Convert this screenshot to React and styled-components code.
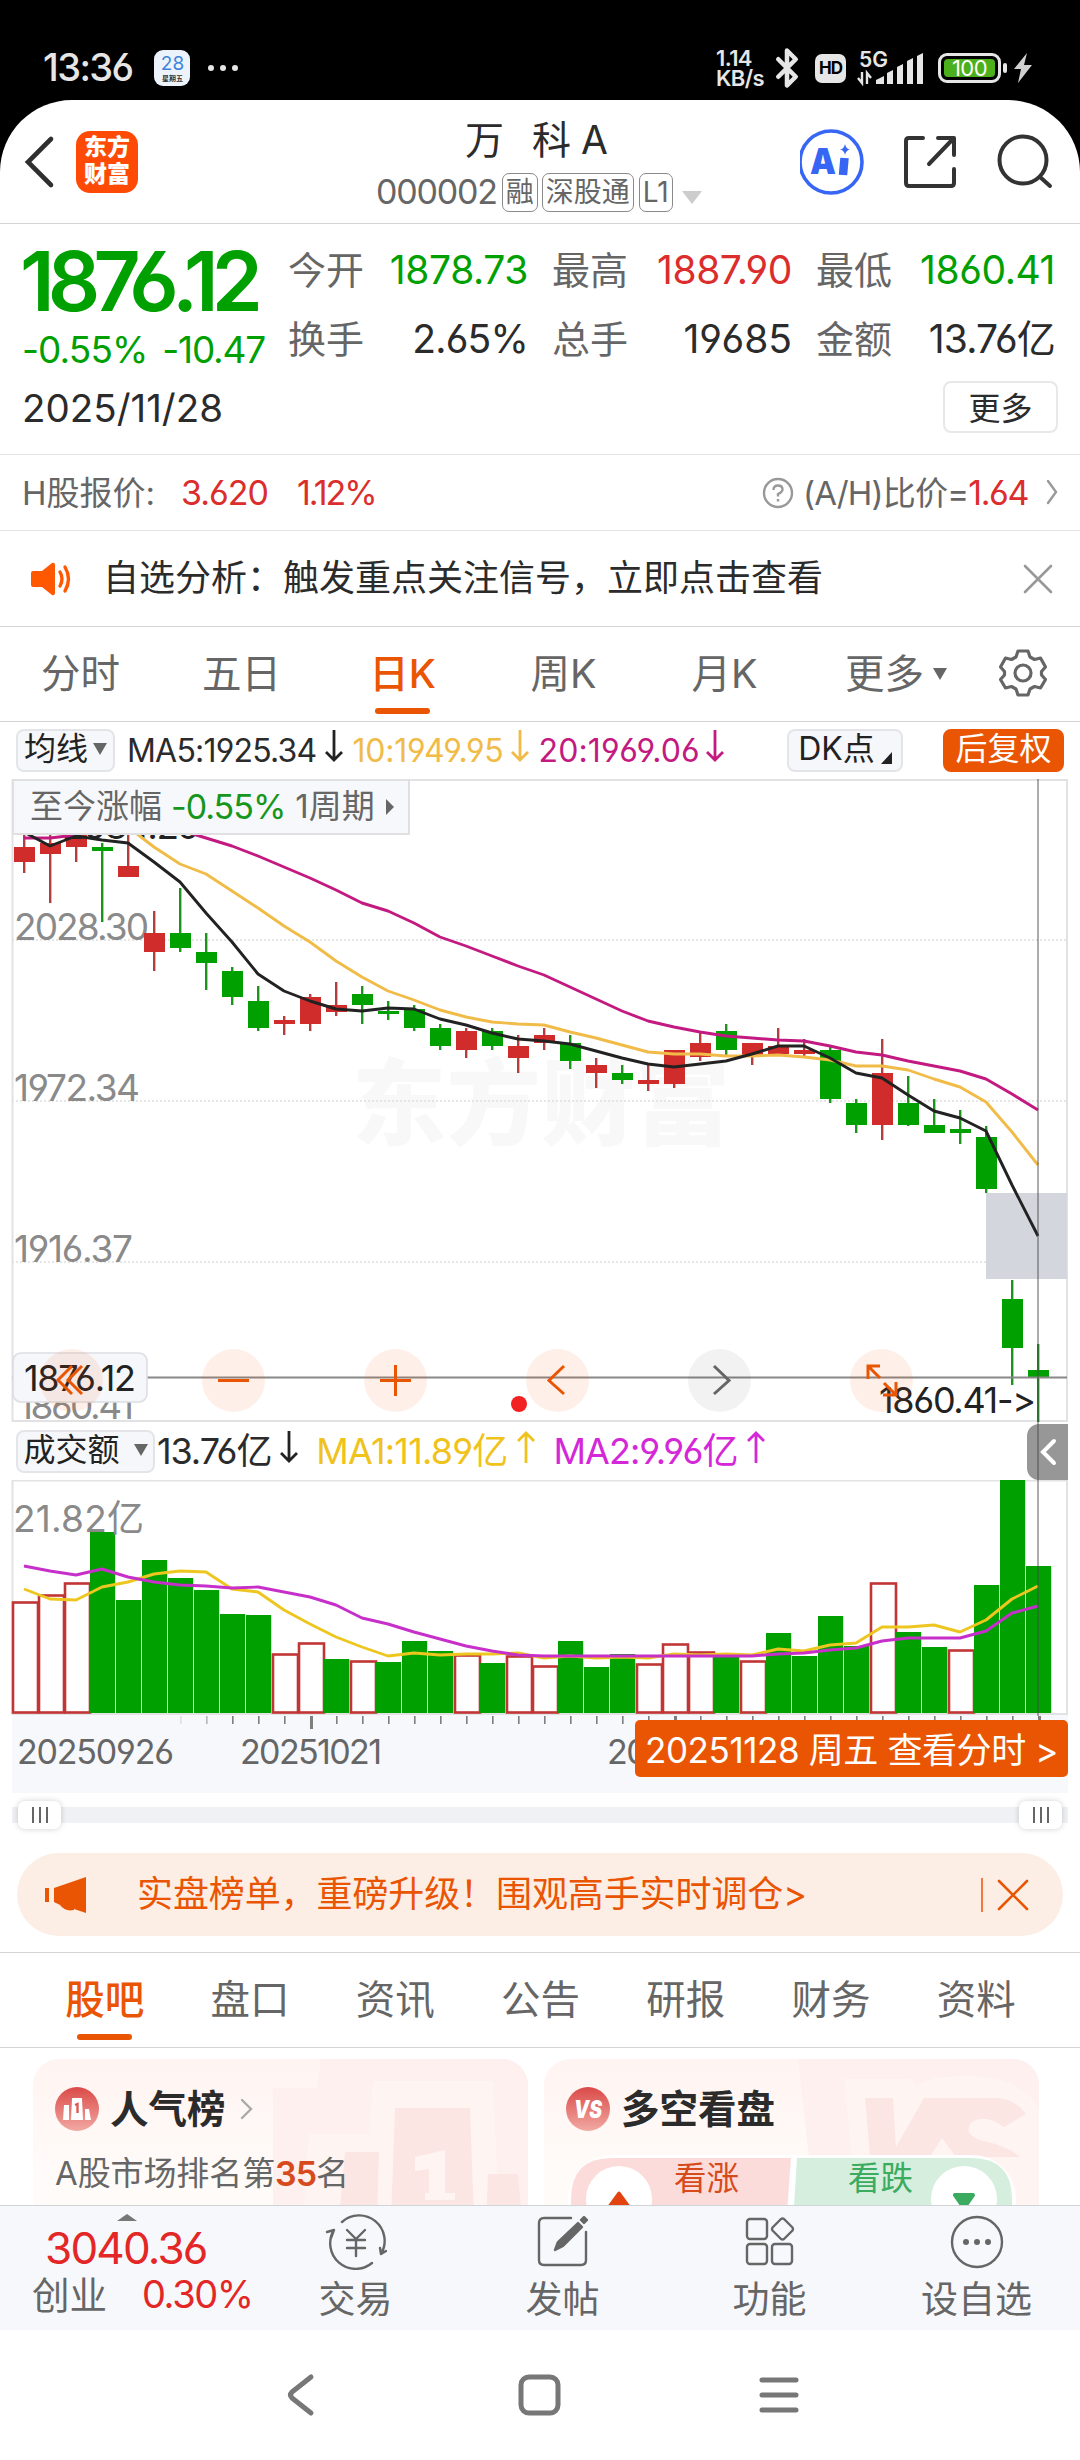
import React from "react";
import styled, { createGlobalStyle } from "styled-components";
import { Bluetooth } from "lucide-react";

const GlobalStyle = createGlobalStyle`
  * {
    box-sizing: border-box;
  }

  body {
    margin: 0;
    background: #fff;
    font-family: Inter, "Noto Sans CJK SC", sans-serif;
    font-feature-settings: "cv03", "cv04";
    color: #2b2b2b;
  }
`;

const ORANGE = "#ea5504";
const GREEN = "#00a000";
const RED = "#d12c2c";
const GREY = "#666";

const Screen = styled.div`
  width: 1080px;
  height: 2460px;
  overflow: hidden;
  display: flex;
  flex-direction: column;
  background: #000;
`;

/* s is letter spacing, ml the gap to the item before */
const Text = styled.span`
  font-size: ${({ size }) => size || 33}px;
  line-height: 1.2;
  color: ${({ c }) => c || "#2b2b2b"};
  font-weight: ${({ w }) => w || 400};
  letter-spacing: ${({ s }) => s || 0}px;
  margin-left: ${({ ml }) => ml || 0}px;
  padding-top: ${({ pt }) => pt || 0}px;
  white-space: pre;
`;

/* ---------- status bar ---------- */

const StatusBar = styled.div`
  height: 100px;
  flex: none;
  padding: 36px 48px 0 43px;
  display: flex;
  align-items: center;
  color: #e6e6e6;
`;

const Calendar = styled.div`
  width: 36px;
  height: 36px;
  margin-left: 22px;
  border-radius: 9px;
  background: #edf3fa;
  display: flex;
  flex-direction: column;
  align-items: center;
  color: #3c84dc;
  font-size: 19px;
  line-height: 22px;
  padding-top: 3px;

  small {
    font-size: 7px;
    line-height: 8px;
    font-weight: 700;
    color: #333;
  }
`;

const Dots = styled.svg`
  width: 32px;
  height: 8px;
  margin-left: 17px;
  fill: #e6e6e6;
`;

const Speed = styled.div`
  margin-left: auto;
  width: 50px;
  font-size: 22px;
  line-height: 20px;
  font-weight: 600;
  letter-spacing: -0.6px;
`;

const HdBadge = styled.div`
  width: 31px;
  height: 29px;
  margin-left: 7px;
  border-radius: 7px;
  background: #e6e6e6;
  color: #000;
  font-size: 17px;
  font-weight: 700;
  letter-spacing: -1px;
  display: flex;
  align-items: center;
  justify-content: center;
`;

const Network = styled.svg`
  width: 70px;
  height: 36px;
  margin-left: 10px;
`;

const Battery = styled.div`
  width: 63px;
  height: 30px;
  margin-left: 12px;
  border: 3px solid #e6e6e6;
  border-radius: 9px;
  padding: 3px;
  display: flex;

  span {
    flex: 1;
    border-radius: 4px;
    background: #4cb01c;
    color: #fff;
    font-size: 22px;
    line-height: 18px;
    text-align: center;
    letter-spacing: -0.5px;
  }
`;

const Charge = styled.svg`
  width: 31px;
  height: 32px;
`;

/* ---------- header ---------- */

const Page = styled.div`
  flex: 1;
  background: #fff;
  border-radius: 72px 72px 0 0;
  display: flex;
  flex-direction: column;
`;

const Header = styled.header`
  height: 124px;
  flex: none;
  border-bottom: 1px solid #d4d4d4;
  display: grid;
  grid-template-columns: 376px 1fr 280px;
`;

const HeaderLeft = styled.div`
  padding: 31px 0 0 22px;
  display: flex;
  align-items: flex-start;
`;

const Logo = styled.div`
  width: 62px;
  height: 62px;
  margin-left: 20px;
  border-radius: 14px;
  background: #ff4a05;
  color: #fff;
  font-size: 23px;
  font-weight: 900;
  line-height: 27px;
  text-align: center;
  padding-top: 3px;
`;

const HeaderCenter = styled.div`
  display: flex;
  flex-direction: column;
`;

const StockName = styled.div`
  margin: 15px 0 0 89px;
  font-size: 39px;
  line-height: 50px;
  white-space: pre;
  word-spacing: 17px;

  span {
    margin-left: 10px;
  }
`;

const CodeLine = styled.div`
  margin-top: 8px;
  height: 39px;
  display: flex;
  align-items: center;
`;

const Tag = styled.span`
  height: 39px;
  margin-left: ${({ ml }) => ml}px;
  width: ${({ width }) => width}px;
  border: 1.5px solid #8a8a8a;
  border-radius: 7px;
  display: flex;
  align-items: center;
  justify-content: center;
  font-size: 28px;
  line-height: 34px;
  padding-bottom: 2px;
  color: #666;
  flex: none;
`;

const HeaderRight = styled.svg`
  width: 280px;
  height: 122px;
`;

/* ---------- quote ---------- */

const Quote = styled.section`
  height: 231px;
  flex: none;
  padding: 0 25px 0 22px;
  border-bottom: 1px solid #e4e4e4;
  display: grid;
  grid-template-columns: 266px 1fr;
  grid-template-rows: 151px 1fr;
`;

const PriceBlock = styled.div`
  display: flex;
  flex-direction: column;
`;

const Price = styled.div`
  margin: 12px 0 0 -2px;
  font-size: 82px;
  line-height: 92px;
  font-weight: 600;
  color: ${GREEN};
  letter-spacing: -6.8px;
`;

const Change = styled.div`
  display: flex;
  justify-content: space-between;
  width: 243px;
`;

const Stats = styled.div`
  padding-top: 12px;
  display: grid;
  grid-template-columns: 240px 240px 239px;
  grid-template-rows: 69px 69px;
  column-gap: 24px;
`;

const Stat = styled.div`
  display: flex;
  align-items: center;
  justify-content: space-between;
`;

const MoreButton = styled.button`
  justify-self: end;
  width: 115px;
  height: 52px;
  margin: 6px -3px 0 0;
  padding: 0 0 2px;
  border: 2px solid #e8e8e8;
  border-radius: 8px;
  background: #fff;
  font: inherit;
  font-size: 32px;
  color: #2b2b2b;
`;

const HkRow = styled.div`
  height: 76px;
  flex: none;
  padding: 2px 22px 0;
  border-bottom: 1px solid #e4e4e4;
  display: flex;
  align-items: center;
`;

const Push = styled.div`
  margin-left: auto;
  display: flex;
  align-items: center;
`;

const Notice = styled.div`
  height: 96px;
  flex: none;
  padding: 0 27px 0 30px;
  border-bottom: 1px solid #d4d4d4;
  display: flex;
  align-items: center;
`;

/* ---------- tabs ---------- */

const PeriodTabs = styled.nav`
  height: 95px;
  flex: none;
  border-bottom: 1px solid #d4d4d4;
  display: grid;
  grid-template-columns: repeat(5, 161px) 182px 72px;
`;

const InfoTabs = styled.nav`
  height: 96px;
  flex: none;
  padding: 0 31px 0 32px;
  border-top: 1px solid #d4d4d4;
  border-bottom: 1px solid #d4d4d4;
  display: grid;
  grid-template-columns: repeat(7, 1fr);
`;

const Tab = styled.div`
  display: flex;
  flex-direction: column;
  align-items: center;
  justify-content: space-between;
  padding: 22px 0 7px;
  font-size: 39.5px;
  line-height: 50px;
  color: ${({ $active }) => ($active ? ORANGE : GREY)};
  font-weight: ${({ $active }) => ($active ? 500 : 400)};

  &::after {
    content: "";
    width: 55px;
    height: 6px;
    border-radius: 3px;
    background: ${({ $active }) => ($active ? ORANGE : "transparent")};
  }
`;

const TabLabel = styled.span`
  display: flex;
  align-items: center;
  gap: 9px;
`;

/* ---------- chart ---------- */

const IndicatorRow = styled.div`
  height: 57px;
  flex: none;
  padding: 0 16px;
  display: flex;
  align-items: center;
`;

const Pill = styled.div`
  width: ${({ width }) => width}px;
  height: 43px;
  margin-left: ${({ ml }) => ml || 0}px;
  padding-bottom: 3px;
  border: 2px solid ${({ $solid }) => ($solid ? ORANGE : "#e3e5e9")};
  border-radius: 8px;
  background: ${({ $solid }) => ($solid ? ORANGE : "#f6f7fa")};
  color: ${({ $solid }) => ($solid ? "#fff" : "#222")};
  font-size: 32px;
  line-height: 36px;
  display: flex;
  align-items: center;
  justify-content: center;
  gap: ${({ gap }) => gap || 5}px;
  flex: none;
`;

const ChartArea = styled.div`
  position: relative;
  flex: none;
  height: 1015px;
  display: flex;
  flex-direction: column;
`;

const Drawing = styled.svg`
  display: block;
  flex: none;
  width: 1080px;
  height: ${({ h }) => h}px;
`;

const AxisText = styled.text`
  font-feature-settings: "cv03", "cv04", "calt" 0;
`;

const VolumeRow = styled.div`
  height: 58px;
  flex: none;
  padding-left: 16px;
  display: flex;
  align-items: center;
`;

const RangeInfo = styled.div`
  position: absolute;
  left: 12px;
  top: 0;
  width: 398px;
  height: 56px;
  border: 2px solid #e0e0e2;
  background: #f7f8fb;
  padding-left: 16px;
  display: flex;
  align-items: center;
`;

const PeriodArrow = styled.svg`
  width: 9px;
  height: 18px;
  margin-left: 11px;
`;

const CrossLine = styled.div`
  position: absolute;
  left: 1037px;
  top: 0;
  width: 2px;
  height: 937px;
  background: rgba(70, 70, 70, 0.45);
`;

const ZoomBar = styled.div`
  position: absolute;
  left: 40px;
  top: 570px;
  display: flex;
  gap: 99px;
`;

const RoundButton = styled.div`
  width: 63px;
  height: 63px;
  border-radius: 50%;
  background: ${({ $muted }) => ($muted ? "rgba(0,0,0,0.05)" : "rgba(240,90,10,0.09)")};

  svg {
    display: block;
    fill: none;
    stroke: ${({ $muted }) => ($muted ? GREY : ORANGE)};
    stroke-width: 3;
  }
`;

const SideHandle = styled.div`
  position: absolute;
  left: 1027px;
  top: 645px;
  width: 41px;
  height: 56px;
  border-radius: 12px 0 0 12px;
  background: rgba(120, 120, 120, 0.77);
  display: flex;
  align-items: center;
  justify-content: center;
`;

const DateBadge = styled.div`
  position: absolute;
  left: 635px;
  top: 941px;
  width: 433px;
  height: 57px;
  padding-bottom: 3px;
  border-radius: 5px;
  background: ${ORANGE};
  color: #fff;
  font-size: 35px;
  display: flex;
  align-items: center;
  justify-content: center;
  white-space: pre;
  letter-spacing: -0.4px;
`;

const Slider = styled.div`
  height: 42px;
  flex: none;
  margin: 0 12px;
  padding-top: 7px;
`;

const Track = styled.div`
  height: 28px;
  padding: 0 6px;
  border-radius: 8px;
  background: linear-gradient(#fff 6px, #f0f1f4 6px, #f0f1f4 22px, #fff 22px);
  display: flex;
  justify-content: space-between;
`;

const Grip = styled.div`
  width: 43px;
  height: 28px;
  border-radius: 7px;
  background: #fff;
  box-shadow: 0 0 6px rgba(0, 0, 0, 0.18);
  display: flex;
  align-items: center;
  justify-content: center;
  gap: 5px;

  i {
    width: 2px;
    height: 16px;
    background: #666;
  }
`;

const Banner = styled.div`
  height: 83px;
  flex: none;
  margin: 17px 17px 16px;
  padding: 0 34px 0 28px;
  border-radius: 42px;
  background: #fceee5;
  display: flex;
  align-items: center;
`;

/* ---------- cards ---------- */

const Cards = styled.div`
  height: 157px;
  flex: none;
  overflow: hidden;
  padding: 11px 41px 0 33px;
  display: grid;
  grid-template-columns: 495px 495px;
  gap: 16px;
`;

const Card = styled.div`
  position: relative;
  height: 190px;
  border-radius: 26px;
  overflow: hidden;
  background: linear-gradient(#fff4f2, #fffbf8 60%);
`;

const CardArt = styled.svg`
  position: absolute;
  right: 0;
  top: 0;
  width: 255px;
  height: 160px;
`;

const CardBody = styled.div`
  position: relative;
  padding: 27px 22px 0;
`;

const CardTitle = styled.div`
  height: 46px;
  display: flex;
  align-items: center;
`;

const Duel = styled.svg`
  display: block;
  width: 451px;
  height: 80px;
  margin-top: 21px;
`;

/* ---------- bottom ---------- */

const BottomBar = styled.footer`
  height: 125px;
  flex: none;
  border-top: 1px solid #cfd4d8;
  background: #f7f8fb;
  display: grid;
  grid-template-columns: 252px repeat(4, 207px);
`;

const IndexBox = styled.div`
  padding: 8px 0 0 32px;
  display: flex;
  flex-direction: column;
`;

const IndexLine = styled.div`
  display: flex;
  align-items: center;
  height: ${({ h }) => h}px;
`;

const Action = styled.div`
  padding-top: 8px;
  display: flex;
  flex-direction: column;
  align-items: center;
  font-size: 37px;
  line-height: 48px;
  color: ${GREY};

  svg {
    display: block;
    margin-bottom: 6px;
    fill: none;
    stroke: #666;
    stroke-width: 2.4;
    stroke-linecap: round;
    stroke-linejoin: round;
  }
`;

const SystemNav = styled.div`
  height: 130px;
  flex: none;
  background: #fff;

  svg {
    display: block;
    fill: none;
    stroke: #777;
    stroke-width: 5;
    stroke-linecap: round;
    stroke-linejoin: round;
  }
`;

/* up/down, high, body top, body bottom, low */
const candles = [
  [1, 825, 847, 862, 873], [1, 825, 843, 854, 903], [1, 800, 830, 847, 862],
  [0, 843, 847, 851, 922], [1, 820, 866, 877, 877], [1, 911, 933, 952, 971],
  [0, 888, 933, 948, 952], [0, 933, 952, 963, 990], [0, 967, 971, 997, 1005],
  [0, 986, 1001, 1028, 1031], [1, 1016, 1020, 1024, 1035], [1, 994, 997, 1024, 1031],
  [1, 982, 1005, 1012, 1016], [0, 986, 994, 1005, 1024], [0, 1001, 1011, 1014, 1020],
  [0, 1005, 1009, 1028, 1031], [0, 1024, 1028, 1046, 1050], [1, 1028, 1031, 1050, 1058],
  [0, 1028, 1031, 1046, 1050], [1, 1035, 1046, 1058, 1073], [1, 1028, 1035, 1043, 1050],
  [0, 1035, 1043, 1061, 1069], [1, 1058, 1065, 1073, 1088], [0, 1065, 1073, 1080, 1084],
  [1, 1065, 1080, 1084, 1091], [1, 1050, 1050, 1084, 1088], [1, 1032, 1043, 1057, 1061],
  [0, 1024, 1031, 1050, 1057], [1, 1043, 1043, 1057, 1065], [1, 1028, 1046, 1054, 1054],
  [1, 1039, 1050, 1054, 1056], [0, 1047, 1050, 1099, 1103], [0, 1099, 1103, 1125, 1133],
  [1, 1039, 1073, 1125, 1140], [0, 1076, 1103, 1125, 1126], [0, 1099, 1125, 1133, 1133],
  [0, 1110, 1129, 1133, 1144], [0, 1126, 1137, 1189, 1193], [0, 1280, 1299, 1348, 1385],
  [0, 1344, 1370, 1377, 1423],
];

const ma5 = [832, 846, 836, 840, 843, 862, 882, 913, 942, 974, 991, 1001, 1009, 1011, 1008, 1009, 1019, 1025, 1033, 1039, 1041, 1044, 1051, 1058, 1064, 1067, 1064, 1061, 1054, 1046, 1046, 1058, 1073, 1078, 1095, 1111, 1118, 1131, 1185, 1236];
const ma10 = [800, 800, 805, 812, 827, 847, 864, 874, 891, 908, 926, 942, 961, 977, 991, 1000, 1010, 1017, 1022, 1024, 1025, 1032, 1038, 1045, 1052, 1054, 1054, 1056, 1056, 1055, 1057, 1060, 1066, 1066, 1070, 1079, 1087, 1102, 1132, 1165];
const ma20 = [838, 838, 835, 830, 826, 826, 830, 838, 846, 856, 867, 878, 890, 903, 911, 923, 937, 946, 956, 966, 975, 987, 999, 1011, 1021, 1027, 1032, 1036, 1038, 1040, 1041, 1046, 1052, 1055, 1061, 1066, 1071, 1079, 1094, 1110];

/* up/down, bar top */
const volumes = [
  [1, 1602], [1, 1595], [1, 1583], [0, 1532], [0, 1600], [0, 1560], [0, 1578], [0, 1590],
  [0, 1614], [0, 1615], [1, 1654], [1, 1643], [0, 1659], [1, 1661], [0, 1662], [0, 1641],
  [0, 1651], [1, 1655], [0, 1663], [1, 1656], [1, 1666], [0, 1641], [0, 1667], [0, 1654],
  [1, 1664], [1, 1644], [1, 1652], [0, 1657], [1, 1661], [0, 1633], [0, 1656], [0, 1616],
  [0, 1646], [1, 1583], [0, 1632], [0, 1647], [1, 1650], [0, 1585], [0, 1480], [0, 1566],
];

const vma1 = [1589, 1599, 1600, 1587, 1582, 1574, 1571, 1572, 1589, 1592, 1610, 1624, 1637, 1647, 1656, 1653, 1655, 1654, 1654, 1653, 1658, 1656, 1658, 1657, 1658, 1654, 1655, 1654, 1655, 1649, 1651, 1645, 1643, 1627, 1627, 1625, 1632, 1620, 1599, 1586];
const vma2 = [1566, 1571, 1575, 1569, 1577, 1582, 1585, 1586, 1588, 1587, 1592, 1597, 1605, 1618, 1624, 1632, 1639, 1646, 1651, 1655, 1656, 1656, 1656, 1656, 1656, 1656, 1656, 1656, 1656, 1654, 1653, 1650, 1648, 1641, 1638, 1638, 1638, 1631, 1613, 1606];

const xAt = (i) => 24 + i * 26;
const toPoints = (list) => list.map((y, i) => `${xAt(i)},${y}`).join(" ");

const Line = ({ data, color }) => (
  <polyline points={toPoints(data)} fill="none" stroke={color} strokeWidth="2.9" strokeLinejoin="round" />
);

const Label = ({ x, y, width, size = 37, color = "#8a8a8a", children }) => (
  <AxisText x={x} y={y} fontSize={size} fill={color} textLength={width} lengthAdjust="spacing">
    {children}
  </AxisText>
);

const PriceChart = () => (
  <Drawing h={643} viewBox="0 779 1080 643">
    <text x="352" y="1138" fontSize="94" fontWeight="900" fill="#f8f8f8" textLength="378">
      东方财富
    </text>
    <g stroke="#dedede" strokeWidth="1.5" strokeDasharray="2 2">
      <path d="M12 940H1067M12 1101H1067M12 1262H1067" />
    </g>
    <path d="M12.5 780V1421H1067V780Z" fill="none" stroke="#e2e2e4" strokeWidth="2" />
    <rect x="986" y="1193" width="81" height="86" fill="#d3d7dd" />
    <Label x={14} y={940} width={135}>2028.30</Label>
    <Label x={14} y={1101} width={126}>1972.34</Label>
    <Label x={14} y={1262} width={119}>1916.37</Label>
    <Label x={18} y={1419} width={116}>1860.41</Label>
    {candles.map(([up, high, top, bottom, low], i) => (
      <g key={i} fill={up ? RED : GREEN}>
        <rect x={xAt(i) - 1} y={high} width="2.4" height={low - high} fill={up ? "#b04040" : "#1c941c"} />
        <rect x={xAt(i) - 10} y={top} width="21" height={bottom - top} />
      </g>
    ))}
    <Label x={62} y={839} width={137} color="#222">2084.26</Label>
    <Line data={ma20} color="#c21a80" />
    <Line data={ma10} color="#f1bb48" />
    <Line data={ma5} color="#222" />
    <path d="M12 1377.5H1067" stroke="#888" strokeWidth="1.8" />
    <rect x="13" y="1353" width="134" height="49" rx="8" fill="#f6f7fa" stroke="#dcdee2" strokeWidth="1.6" />
    <Label x={24} y={1391} width={112} size={36} color="#222">1876.12</Label>
    <Label x={879} y={1413} width={157} size={36} color="#222">{"1860.41->"}</Label>
    <circle cx="519" cy="1404" r="8" fill="#f22222" />
  </Drawing>
);

const VolumeChart = () => (
  <Drawing h={235} viewBox="0 1480 1080 235">
    <path d="M12.5 1480.5V1714H1067V1480.5Z" fill="none" stroke="#e2e2e4" strokeWidth="2" />
    {volumes.map(([up, top], i) =>
      up ? (
        <rect key={i} x={13 + i * 26} y={top + 0.5} width="25" height={1712 - top} fill="#fff" stroke="#c13535" strokeWidth="2.6" />
      ) : (
        <rect key={i} x={12 + i * 26} y={top} width="25.2" height={1713 - top} fill={GREEN} />
      )
    )}
    <Label x={13} y={1532} width={131}>21.82亿</Label>
    <Line data={vma1} color="#edc620" />
    <Line data={vma2} color="#c62fca" />
  </Drawing>
);

const tickOpacity = (i) => (i === 6 ? 0.15 : i === 7 ? 0.4 : 0.75);

const TimeAxis = () => (
  <Drawing h={79} viewBox="0 1715 1080 79">
    <rect x="12" y="1715" width="1056" height="78" fill="#f7f8fb" />
    {volumes.map((_, i) => {
      if (i < 6) return null;
      const major = i === 11 || i === 25 || i === 39;
      return (
        <rect
          key={i}
          x={xAt(i)}
          y="1716"
          width={major ? 3 : 1.6}
          height={major ? 13 : 8}
          fill="#555"
          opacity={tickOpacity(i)}
        />
      );
    })}
    <Label x={17} y={1764} width={157} size={34} color={GREY}>20250926</Label>
    <Label x={240} y={1764} width={142} size={34} color={GREY}>20251021</Label>
    <Label x={607} y={1764} width={136} size={34} color={GREY}>20251110</Label>
  </Drawing>
);

const Triangle = ({ width = 13, height = 12, color = "#666" }) => (
  <svg width={width} height={height} viewBox="0 0 10 10" preserveAspectRatio="none">
    <path d="M0 0H10L5 10Z" fill={color} />
  </svg>
);

const Cross = ({ size, color, width = 2.6 }) => (
  <svg width={size} height={size} viewBox={`0 0 ${size} ${size}`}>
    <path d={`M2 2L${size - 2} ${size - 2}M${size - 2} 2L2 ${size - 2}`} stroke={color} strokeWidth={width} strokeLinecap="round" />
  </svg>
);

const Chevron = ({ w = 12, h = 24, color = "#999", stroke = 2.4 }) => (
  <svg width={w} height={h} viewBox={`0 0 ${w} ${h}`}>
    <path d={`M2 2L${w - 2} ${h / 2}L2 ${h - 2}`} fill="none" stroke={color} strokeWidth={stroke} strokeLinecap="round" />
  </svg>
);

const Arrow = ({ color, up }) => (
  <svg width="20" height="34" viewBox="0 0 20 34">
    <path
      d={up ? "M10 33V3M2 11L10 3L18 11" : "M10 1V31M2 23L10 31L18 23"}
      fill="none"
      stroke={color}
      strokeWidth="2.8"
    />
  </svg>
);

const Gear = () => (
  <svg width="48" height="48" viewBox="0 0 48 48" fill="none" stroke="#666" strokeWidth="3.2" strokeLinejoin="round">
    <path d="M19 2H29L31 8L35.5 10.5L41.5 9L46.5 18L42.5 22.5V26L46.5 30.5L41.5 39L35.5 37.5L31 40L29 46H19L17 40L12.5 37.5L6.5 39L1.5 30.5L5.500 26V22.5L1.5 18L6.5 9L12.5 10.5L17 8Z" />
    <circle cx="24" cy="24" r="8" />
  </svg>
);

const stats = [
  ["今开", "1878.73", GREEN, -0.4],
  ["最高", "1887.90", "#dc2d2d", -0.4],
  ["最低", "1860.41", GREEN, -0.4],
  ["换手", "2.65%", "#2b2b2b", -0.8],
  ["总手", "19685", "#2b2b2b", 0],
  ["金额", "13.76亿", "#2b2b2b", -0.8],
];

const Status = () => (
  <StatusBar>
    <Text size={38} c="#e6e6e6" w={500} s={-1.6}>13:36</Text>
    <Calendar>
      28<small>星期五</small>
    </Calendar>
    <Dots viewBox="0 0 32 8">
      <circle cx="4" cy="4" r="3" />
      <circle cx="16" cy="4" r="3" />
      <circle cx="28" cy="4" r="3" />
    </Dots>
    <Speed>
      1.14
      <br />
      KB/s
    </Speed>
    <Bluetooth size={42} strokeWidth={2.6} color="#e6e6e6" />
    <HdBadge>HD</HdBadge>
    <Network viewBox="0 0 70 36">
      <text x="3" y="17" fontSize="21" fontWeight="600" fill="#e6e6e6" textLength="29" lengthAdjust="spacingAndGlyphs">5G</text>
      <g fill="#e6e6e6">
        <path d="M20 34V30L28 26V34Z" />
        <path d="M31 34V23L37 20V34Z" />
        <path d="M41 34V17L47 14V34Z" />
        <path d="M51 34V11L57 8V34Z" />
        <path d="M61 34V6L67 3V34Z" />
      </g>
      <path d="M2 28L6 33V22M11 34V23L15 28" fill="none" stroke="#e6e6e6" strokeWidth="2.4" />
    </Network>
    <Battery>
      <span>100</span>
    </Battery>
    <Charge viewBox="0 0 31 32">
      <rect x="2" y="11" width="4" height="10" rx="2" fill="#e6e6e6" />
      <path d="M26 1L13 17H20L17 31L31 13H23Z" fill="#d0d0d0" />
    </Charge>
  </StatusBar>
);

const TopHeader = () => (
  <Header>
    <HeaderLeft>
      <svg width="34" height="62" viewBox="0 0 34 62">
        <path d="M29 8L6 31L29 54" fill="none" stroke="#2f2f2f" strokeWidth="4.6" strokeLinecap="round" />
      </svg>
      <Logo>
        东方
        <br />
        财富
      </Logo>
    </HeaderLeft>
    <HeaderCenter>
      <StockName>
        万 科<span>A</span>
      </StockName>
      <CodeLine>
        <Text size={34} c="#666" s={-1.2}>000002</Text>
        <Tag ml={5} width={36}>融</Tag>
        <Tag ml={4} width={92}>深股通</Tag>
        <Tag ml={5} width={34}>L1</Tag>
        <Text ml={9}><Triangle width={20} height={13} color="#ccc" /></Text>
      </CodeLine>
    </HeaderCenter>
    <HeaderRight viewBox="800 100 280 122" fill="none" stroke="#333" strokeWidth="4" strokeLinecap="round">
      <circle cx="831" cy="162" r="31" stroke="#3766f5" strokeWidth="3.6" />
      <text
        x="810"
        y="174"
        fontSize="36"
        fontWeight="900"
        fill="#3766f5"
        stroke="none"
        textLength="26"
        lengthAdjust="spacingAndGlyphs"
      >
        A
      </text>
      <path d="M844.5 158L843 175" stroke="#3766f5" strokeWidth="8.500" strokeLinecap="butt" />
      <path d="M845 144Q846 149 850 149.5Q846 150 845 155Q844 150 840 149.5Q844 149 845 144Z" fill="#3766f5" stroke="none" />
      <path d="M923 138H909Q906 138 906 141V183Q906 186 909 186H951Q954 186 954 183V169M938 138H954V155M952 140L929 164" strokeLinejoin="round" />
      <circle cx="1023" cy="160" r="23.5" />
      <path d="M1040 177L1050 186" />
    </HeaderRight>
  </Header>
);

const CardIcon = ({ children }) => (
  <svg width="44" height="44" viewBox="0 0 44 44">
    <defs>
      <linearGradient id="badge" x1="0" y1="0" x2="0" y2="1">
        <stop offset="0" stopColor="#da4a48" />
        <stop offset="1" stopColor="#f2a9a3" />
      </linearGradient>
    </defs>
    <circle cx="22" cy="22" r="22" fill="url(#badge)" />
    {children}
  </svg>
);

const App = () => (
  <>
    <GlobalStyle />
    <Screen>
      <Status />
      <Page>
        <TopHeader />

        <Quote>
          <PriceBlock>
            <Price>1876.12</Price>
            <Change>
              <Text size={37} c={GREEN} s={-0.9}>-0.55%</Text>
              <Text size={37} c={GREEN} s={-1.2}>-10.47</Text>
            </Change>
          </PriceBlock>
          <Stats>
            {stats.map(([name, value, color, spacing]) => (
              <Stat key={name}>
                <Text size={38} c="#666">{name}</Text>
                <Text size={39} c={color} s={spacing}>{value}</Text>
              </Stat>
            ))}
          </Stats>
          <Text size={38.5} s={0} pt={10}>2025/11/28</Text>
          <MoreButton>更多</MoreButton>
        </Quote>

        <HkRow>
          <Text size={33} c="#666">H股报价:</Text>
          <Text size={34} c="#dc2d2d" ml={26} s={-1}>3.620</Text>
          <Text size={34} c="#dc2d2d" ml={29} s={-2}>1.12%</Text>
          <Push>
            <svg width="32" height="32" viewBox="0 0 32 32" fill="none" stroke="#999" strokeWidth="2.4">
              <circle cx="16" cy="16" r="14" />
              <path d="M11.5 13Q11.5 8.5 16 8.5Q20.5 8.5 20.5 12.5Q20.5 15 16 17V19.5M16 22V24.5" />
            </svg>
            <Text size={33} c="#666" ml={9} s={-0.8}>(A/H)比价=</Text>
            <Text size={34} c="#dc2d2d" s={-1.4}>1.64</Text>
            <Text ml={18}><Chevron h={26} /></Text>
          </Push>
        </HkRow>

        <Notice>
          <svg width="44" height="36" viewBox="0 0 44 36">
            <path d="M3 10H12L22 2Q25 1 25 4V32Q25 35 22 34L12 26H3Q1 26 1 24V12Q1 10 3 10Z" fill="#ff5800" />
            <path d="M30 11Q34 18 30 25M35 6Q42 18 35 30" fill="none" stroke="#ff5800" strokeWidth="3.4" strokeLinecap="round" />
          </svg>
          <Text size={36} ml={29}>自选分析：触发重点关注信号，立即点击查看</Text>
          <Push>
            <Cross size={30} color="#999" />
          </Push>
        </Notice>

        <PeriodTabs>
          <Tab>分时</Tab>
          <Tab>五日</Tab>
          <Tab $active>日K</Tab>
          <Tab>周K</Tab>
          <Tab>月K</Tab>
          <Tab>
            <TabLabel>
              更多 <Triangle width={14} height={12} />
            </TabLabel>
          </Tab>
          <Tab>
            <TabLabel>
              <Gear />
            </TabLabel>
          </Tab>
        </PeriodTabs>

        <IndicatorRow>
          <Pill width={99}>均线<Triangle width={14} height={12} /></Pill>
          <Text size={32} ml={12} s={-0.8} pt={2}>MA5:1925.34</Text>
          <Text ml={8}><Arrow color="#222" /></Text>
          <Text size={32} c="#f1bb48" ml={8} s={-0.2} pt={2}>10:1949.95</Text>
          <Text ml={6}><Arrow color="#f1bb48" /></Text>
          <Text size={32} c="#c21a80" ml={9} s={0.1} pt={2}>20:1969.06</Text>
          <Text ml={5}><Arrow color="#c21a80" /></Text>
          <Push>
            <Pill width={116} gap={6}>
              DK点
              <svg width="11" height="30" viewBox="0 0 11 30">
                <path d="M11 18V30H0Z" fill="#222" />
              </svg>
            </Pill>
            <Pill width={121} ml={40} $solid>后复权</Pill>
          </Push>
        </IndicatorRow>

        <ChartArea>
          <PriceChart />
          <VolumeRow>
            <Pill width={139} gap={14}>成交额<Triangle width={14} height={12} /></Pill>
            <Text size={36} ml={2} s={-1.1} pt={2}>13.76亿</Text>
            <Text ml={8}><Arrow color="#222" /></Text>
            <Text size={36} c="#f0c31c" ml={17} s={-0.8} pt={2}>MA1:11.89亿</Text>
            <Text ml={8}><Arrow color="#f0c31c" up /></Text>
            <Text size={36} c="#d428d8" ml={18} s={-1} pt={2}>MA2:9.96亿</Text>
            <Text ml={8}><Arrow color="#d428d8" up /></Text>
          </VolumeRow>
          <VolumeChart />
          <TimeAxis />
          <RangeInfo>
            <Text size={33} c="#666">至今涨幅</Text>
            <Text size={34} c="#16961c" ml={9} s={-1}>-0.55%</Text>
            <Text size={33} c="#666" ml={10}>1周期</Text>
            <PeriodArrow viewBox="0 0 9 18">
              <path d="M0 1L8 9L0 17Z" fill="#666" />
            </PeriodArrow>
          </RangeInfo>
          <SideHandle>
            <svg width="18" height="28" viewBox="0 0 18 28">
              <path d="M15 3L4 14L15 25" fill="none" stroke="#fff" strokeWidth="4" strokeLinecap="round" />
            </svg>
          </SideHandle>
          <CrossLine />
          <ZoomBar>
            <RoundButton>
              <svg width="63" height="63"><path d="M32 17L18 31L32 45M42 17L28 31L42 45" /></svg>
            </RoundButton>
            <RoundButton>
              <svg width="63" height="63"><path d="M16 31.5H47" /></svg>
            </RoundButton>
            <RoundButton>
              <svg width="63" height="63"><path d="M16 31.5H47M31.5 16V47" /></svg>
            </RoundButton>
            <RoundButton>
              <svg width="63" height="63"><path d="M38 17L23 31.5L38 45" /></svg>
            </RoundButton>
            <RoundButton $muted>
              <svg width="63" height="63"><path d="M26 17L41 31.5L26 45" /></svg>
            </RoundButton>
            <RoundButton>
              <svg width="63" height="63"><path d="M30 17H18V30M18 17L30 29M46 33V46H33M34 34L46 46" /></svg>
            </RoundButton>
          </ZoomBar>
          <DateBadge>20251128 周五 查看分时 &gt;</DateBadge>
        </ChartArea>

        <Slider>
          <Track>
            <Grip><i /><i /><i /></Grip>
            <Grip><i /><i /><i /></Grip>
          </Track>
        </Slider>

        <Banner>
          <svg width="42" height="38" viewBox="0 0 42 38" fill={ORANGE}>
            <path d="M0 12H4V26H0ZM9 12L41 1V37L29 33V34Q20 36 15 29L9 26Z" />
          </svg>
          <Text size={36} c={ORANGE} ml={50} s={-0.1}>实盘榜单，重磅升级！围观高手实时调仓&gt;</Text>
          <Push>
            <svg width="16" height="34">
              <path d="M1 0V34" stroke={ORANGE} strokeWidth="1.5" />
            </svg>
            <Cross size={32} color={ORANGE} />
          </Push>
        </Banner>

        <InfoTabs>
          <Tab $active>股吧</Tab>
          <Tab>盘口</Tab>
          <Tab>资讯</Tab>
          <Tab>公告</Tab>
          <Tab>研报</Tab>
          <Tab>财务</Tab>
          <Tab>资料</Tab>
        </InfoTabs>

        <Cards>
          <Card>
            <CardArt viewBox="0 0 255 160">
              <path d="M48 0H255V160H0V29H44Z" fill="#fdf0ee" />
              <path d="M100 22H220L226 160H30L36 75H96Z" fill="#fef5f2" />
              <path d="M122 49H197L201 160H118ZM72 93H106L104 160H66ZM215 115H245L249 160H213Z" fill="#fbe6e4" />
              <path d="M142 98L172 91V134H182V141H152V134H156V110L142 112Z" fill="#fef5f2" />
            </CardArt>
            <CardBody>
              <CardTitle>
                <CardIcon>
                  <path d="M9 18H14V33H8ZM17 11H27L28 33H16ZM30 22H34L36 33H30Z" fill="#fff" />
                  <path d="M20 18L22.5 17V26" fill="none" stroke="#da5a56" strokeWidth="2.4" />
                </CardIcon>
                <Text size={38.5} w={600} ml={11}>人气榜</Text>
                <Text ml={14}><Chevron w={13} h={22} color="#aaa" /></Text>
              </CardTitle>
              <IndexLine h={84}>
                <Text size={33} c="#666" s={-0.1}>A股市场排名第</Text>
                <Text size={34} c="#d64a1c" w={600} s={-1}>35</Text>
                <Text size={33} c="#666">名</Text>
              </IndexLine>
            </CardBody>
          </Card>
          <Card>
            <CardArt viewBox="0 0 255 160">
              <path d="M14 0H255V160H32Z" fill="#fdf0ee" />
              <path d="M60 20H126L132 26L152 19Q235 10 255 50V160H74Z" fill="#fef5f2" />
              <path d="M81 39H109L112 88L140 39H212Q232 40 242 55L220 68Q200 54 187 64Q178 76 200 82Q226 88 236 98H172L158 79L146 98H86Z" fill="#fbe6e4" />
            </CardArt>
            <CardBody>
              <CardTitle>
                <CardIcon>
                  <text x="8" y="31" fontSize="24" fontWeight="900" fontStyle="italic" fill="#fff" textLength="28" lengthAdjust="spacingAndGlyphs">VS</text>
                </CardIcon>
                <Text size={38.5} w={600} ml={11}>多空看盘</Text>
              </CardTitle>
              <Duel viewBox="566 2153 451 80">
                <rect x="568" y="2155" width="448" height="90" rx="44" fill="#fff" />
                <path d="M612 2158H791L785 2240H571V2199Q571 2158 612 2158Z" fill="#fcdcda" />
                <path d="M797 2158H971Q1012 2158 1012 2199V2240H792Z" fill="#d6eedd" />
                <circle cx="619" cy="2199" r="33" fill="#fff" />
                <circle cx="964" cy="2199" r="33" fill="#fff" />
                <path d="M619 2193L630 2208H608Z" fill="#e2430f" stroke="#e2430f" strokeWidth="3" strokeLinejoin="round" />
                <path d="M955 2195H973L964 2208Z" fill="#3bab60" stroke="#3bab60" strokeWidth="4" strokeLinejoin="round" />
                <text x="674" y="2190" fontSize="32.5" fill="#d64a1c">看涨</text>
                <text x="848" y="2190" fontSize="32.5" fill="#3bab60">看跌</text>
              </Duel>
            </CardBody>
          </Card>
        </Cards>

        <BottomBar>
          <IndexBox>
            <svg width="189" height="7" viewBox="0 0 189 7">
              <path d="M85 7L95 0L105 7Z" fill="#777" />
            </svg>
            <IndexLine h={54}>
              <Text size={44} c="#e32626" ml={13} s={-1.8}>3040.36</Text>
            </IndexLine>
            <IndexLine h={40}>
              <Text size={37.5} c="#666">创业</Text>
              <Text size={38} c="#e32626" ml={35} s={-1.4}>0.30%</Text>
            </IndexLine>
          </IndexBox>
          <Action>
            <svg width="62" height="56" viewBox="0 0 62 56">
              <path d="M17 8A25.5 25.5 0 0 1 56 40M56 40L55 34M56 40L61 37M47 49A25.5 25.5 0 0 1 9 16M9 16L2 18M9 16L6 24" />
              <path d="M22 16L31 25L40 16M22 26H40M22 34H40M31 25V42" />
            </svg>
            交易
          </Action>
          <Action>
            <svg width="56" height="56" viewBox="0 0 56 56">
              <path d="M36 4H9Q4 4 4 9V46Q4 51 9 51H46Q51 51 51 46V18" />
              <path d="M20 36L23 28L43 9L47 13L28 32ZM46 6L49 3L52 6L49 9Z" fill="#666" />
            </svg>
            发帖
          </Action>
          <Action>
            <svg width="50" height="56" viewBox="0 0 50 56">
              <rect x="2" y="5" width="20" height="20" rx="3" />
              <rect x="2" y="30" width="20" height="20" rx="3" />
              <rect x="27" y="30" width="20" height="20" rx="3" />
              <path d="M36 5Q37.5 4 39 5L47.5 13.5Q48.5 15 47.5 16.5L39 25Q37.5 26 36 25L27.5 16.5Q26.5 15 27.5 13.5Z" />
            </svg>
            功能
          </Action>
          <Action>
            <svg width="56" height="56" viewBox="0 0 56 56">
              <circle cx="28" cy="28" r="25" />
              <g fill="#666" stroke="none">
                <circle cx="17" cy="28" r="3" />
                <circle cx="28" cy="28" r="3" />
                <circle cx="39" cy="28" r="3" />
              </g>
            </svg>
            设自选
          </Action>
        </BottomBar>

        <SystemNav>
          <svg width="1080" height="130" viewBox="0 2330 1080 130">
            <path d="M311 2377L292 2392Q289 2395 292 2398L311 2413" />
            <rect x="521" y="2377" width="37" height="36" rx="8" />
            <path d="M762 2380H796M762 2395H796M762 2410H796" />
          </svg>
        </SystemNav>
      </Page>
    </Screen>
  </>
);

export default App;
